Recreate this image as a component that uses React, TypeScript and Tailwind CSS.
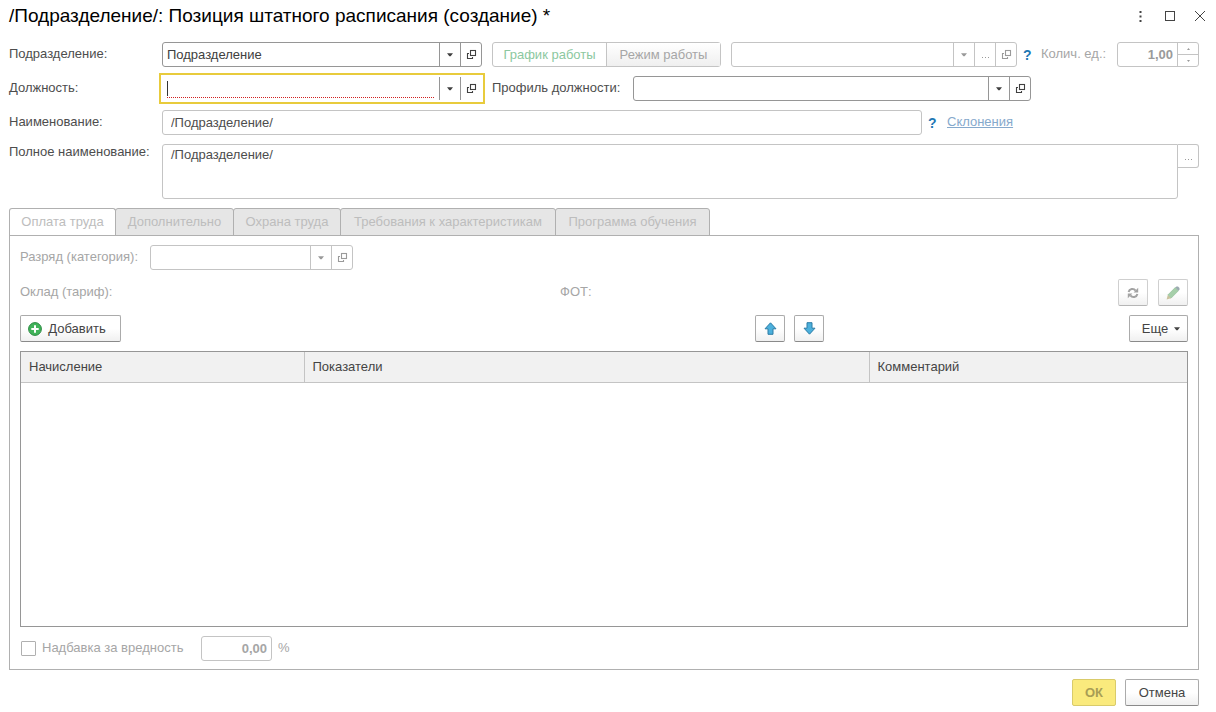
import type { ReactNode } from "react";

const tabs = [
  { title: "Оплата труда", width: "w-[107px]" },
  { title: "Дополнительно", width: "w-[119px]" },
  { title: "Охрана труда", width: "w-[108px]" },
  { title: "Требования к характеристикам", width: "w-[216px]" },
  { title: "Программа обучения", width: "w-[155px]" },
];

const columns = [
  { title: "Начисление", width: "w-[283px]" },
  { title: "Показатели", width: "w-[565px]" },
  { title: "Комментарий", width: "" },
];

function Caret() {
  return (
    <svg width="7" height="4" viewBox="0 0 7 4" fill="currentColor" aria-hidden>
      <path d="M0 0.300h6L3.600 3.300H2.400z" />
    </svg>
  );
}

function OpenIcon() {
  return (
    <svg width="11" height="11" viewBox="0 0 11 11" fill="none" stroke="currentColor" strokeWidth="1.1" aria-hidden>
      <rect x="4.5" y="1.5" width="5" height="5" />
      <path d="M3 4.500H1.500v5h5V8" />
    </svg>
  );
}

function Dots() {
  return (
    <svg width="9" height="9" viewBox="0 0 9 9" fill="currentColor" aria-hidden>
      <path d="M1 7h1v1H1zM4 7h1v1H4zM7 7h1v1H7z" />
    </svg>
  );
}

type FieldProps = {
  id: string;
  label?: string;
  value?: string;
  className: string;
  dots?: boolean;
  disabled?: boolean;
  focused?: boolean;
};

// Reference field: text box with list, optional "..." and open buttons
function RefField({ id, label, value = "", className, dots, disabled, focused }: FieldProps) {
  const line = disabled ? "border-[#c4c4c4] text-[#9a9a9a]" : "border-[#969696] text-[#404040]";
  const frame = focused ? "py-px pr-px outline-2 outline-offset-1 outline-[#e8cb3c]" : "rounded-[3px] border";
  const button = `flex w-[21px] shrink-0 items-center justify-center border-l ${line}`;

  return (
    <div className={`flex h-[25px] bg-white ${line} ${frame} ${className}`}>
      {focused ? (
        <div className="mx-[5px] mb-[2px] mt-1 flex min-w-0 flex-1 border-b border-dotted border-[#d02020]">
          <span className="mb-px w-px bg-[#333]" />
          <input id={id} aria-label={label} defaultValue={value} className="w-full min-w-0 outline-none" />
        </div>
      ) : (
        <input
          id={id}
          aria-label={label}
          defaultValue={value}
          disabled={disabled}
          className="min-w-0 flex-1 px-1 outline-none"
        />
      )}
      <button type="button" aria-label="Выбрать из списка" disabled={disabled} className={button}>
        <Caret />
      </button>
      {dots && (
        <button type="button" aria-label="Выбрать" disabled={disabled} className={button}>
          <Dots />
        </button>
      )}
      <button type="button" aria-label="Открыть" disabled={disabled} className={button}>
        <OpenIcon />
      </button>
    </div>
  );
}

type ButtonProps = {
  className: string;
  label?: string;
  disabled?: boolean;
  children: ReactNode;
};

function Button({ className, label, disabled, children }: ButtonProps) {
  const tone = disabled ? "border-[#cfcfcf] border-b-[#b5b5b5]" : "border-[#ababab] border-b-[#8a8a8a]";
  return (
    <button
      type="button"
      aria-label={label}
      disabled={disabled}
      className={`flex h-[27px] items-center justify-center rounded-[2px] border bg-linear-to-b from-white from-50% to-[#f0f0f0] text-[#444] ${tone} ${className}`}
    >
      {children}
    </button>
  );
}

function Arrow({ down }: { down?: boolean }) {
  return (
    <svg width="13" height="13" viewBox="0 0 13 13" className={down ? "rotate-180" : ""} aria-hidden>
      <path d="M6.500 0.800L12 6.800H9V12.300H4V6.800H1z" fill="#4cb0dc" stroke="#2c7ca6" />
    </svg>
  );
}

function Help() {
  return (
    <button type="button" aria-label="Справка" className="w-2 text-sm font-bold text-[#1f78b4]">
      ?
    </button>
  );
}

export default function App() {
  return (
    <main className="flex min-h-screen flex-col bg-white pb-[6px] pl-[9px] pr-[17px] font-['Liberation_Sans',Arial,sans-serif] text-[13px] text-[#4d4d4d]">
      <header className="-mr-[9px] flex h-8 items-center justify-between">
        <h1 className="text-[19px] text-black">/Подразделение/: Позиция штатного расписания (создание) *</h1>
        <div className="flex gap-[14px] text-[#444]">
          <button type="button" aria-label="Меню" className="flex size-4 items-center justify-center">
            <svg width="3" height="11" viewBox="0 0 3 11" fill="currentColor" aria-hidden>
              <path d="M0.500 0h2v2h-2zM0.500 4.500h2v2h-2zM0.500 9h2v2h-2z" />
            </svg>
          </button>
          <button type="button" aria-label="Развернуть" className="flex size-4 items-center justify-center">
            <svg width="10" height="10" viewBox="0 0 10 10" fill="none" stroke="currentColor" aria-hidden>
              <rect x="0.5" y="0.5" width="9" height="9" />
            </svg>
          </button>
          <button type="button" aria-label="Закрыть" className="flex size-4 items-center justify-center">
            <svg width="10" height="10" viewBox="0 0 10 10" stroke="currentColor" aria-hidden>
              <path d="M0 0l10 10M10 0L0 10" />
            </svg>
          </button>
        </div>
      </header>

      <form className="mt-[10px] flex flex-col gap-[9px]">
        <div className="flex items-center">
          <label htmlFor="department" className="w-[153px] shrink-0 pb-0.5">Подразделение:</label>
          <RefField id="department" value="Подразделение" className="w-80 shrink-0" />
          <div className="ml-[10px] flex h-[25px] w-[229px] shrink-0 rounded-[3px] border border-[#c4c4c4]">
            <button type="button" disabled className="flex-1 text-[#8cc8a0]">График работы</button>
            <button type="button" disabled className="flex-1 border-l border-[#c4c4c4] bg-linear-to-b from-white to-[#efefef] text-[#a6a6a6]">
              Режим работы
            </button>
          </div>
          <RefField id="schedule" label="График работы" className="ml-[10px] min-w-0 flex-1" dots disabled />
          <div className="ml-[6px] flex">
            <Help />
          </div>
          <label htmlFor="quantity" className="ml-[10px] w-[76px] pb-0.5 text-[#a6a6a6]">Колич. ед.:</label>
          <div className="flex h-[25px] w-[82px] shrink-0 rounded-[3px] border border-[#c4c4c4] text-[#9a9a9a]">
            <input id="quantity" defaultValue="1,00" disabled className="min-w-0 flex-1 px-1 text-right font-bold" />
            <div className="flex w-[21px] flex-col border-l border-[#c4c4c4]">
              <button type="button" aria-label="Увеличить" disabled className="flex flex-1 items-center justify-center border-b border-[#c4c4c4]">
                <svg width="3" height="2" viewBox="0 0 3 2" fill="currentColor" aria-hidden>
                  <path d="M0 2L1.500 0L3 2z" />
                </svg>
              </button>
              <button type="button" aria-label="Уменьшить" disabled className="flex flex-1 items-center justify-center">
                <svg width="3" height="2" viewBox="0 0 3 2" fill="currentColor" aria-hidden>
                  <path d="M0 0L1.500 2L3 0z" />
                </svg>
              </button>
            </div>
          </div>
        </div>

        <div className="flex items-center">
          <label htmlFor="position" className="w-[153px] shrink-0 pb-0.5">Должность:</label>
          <RefField id="position" className="w-80 shrink-0" focused />
          <label htmlFor="profile" className="ml-[10px] w-[141px] shrink-0 pb-0.5">Профиль должности:</label>
          <RefField id="profile" className="w-[398px]" />
        </div>

        <div className="flex items-center">
          <label htmlFor="name" className="w-[153px] shrink-0 pb-0.5">Наименование:</label>
          <input
            id="name"
            defaultValue="/Подразделение/"
            className="h-[25px] w-[760px] rounded-[3px] border border-[#c4c4c4] px-2"
          />
          <div className="ml-[6px] flex">
            <Help />
          </div>
          <a href="#declensions" className="ml-[11px] pb-0.5 text-[#86a9cc] underline">Склонения</a>
        </div>

        <div className="flex items-start">
          <label htmlFor="full-name" className="w-[153px] shrink-0 leading-4">Полное наименование:</label>
          <textarea
            id="full-name"
            defaultValue="/Подразделение/"
            className="h-[55px] flex-1 resize-none rounded-[3px] rounded-tr-none border border-[#c4c4c4] px-2"
          />
          <button
            type="button"
            aria-label="Открыть текст"
            className="flex h-6 w-[21px] items-center justify-center rounded-r-[3px] border border-l-0 border-[#c4c4c4] text-[#9a9a9a]"
          >
            <Dots />
          </button>
        </div>
      </form>

      <div role="tablist" className="mt-[9px] flex h-7">
        {tabs.map((tab, i) => (
          <button
            key={tab.title}
            type="button"
            role="tab"
            aria-selected={i === 0}
            disabled
            className={`-mr-px shrink-0 rounded-t-[3px] border border-[#b0b0b0] text-[#bdbdbd] ${tab.width} ${
              i === 0 ? "border-b-white bg-white" : "bg-[#e6e6e6]"
            }`}
          >
            {tab.title}
          </button>
        ))}
      </div>

      <section role="tabpanel" className="-mt-px flex flex-1 flex-col border border-[#b0b0b0] px-[10px] pb-2 pt-[9px] text-[#a6a6a6]">
        <div className="flex items-center">
          <label htmlFor="grade" className="w-[130px] pb-0.5">Разряд (категория):</label>
          <RefField id="grade" className="w-[203px]" disabled />
        </div>

        <div className="mt-[9px] flex items-center">
          <span className="w-[540px] pb-0.5">Оклад (тариф):</span>
          <span className="pb-0.5">ФОТ:</span>
          <div className="ml-auto flex gap-[10px]">
            <Button label="Обновить" className="w-[30px]" disabled>
              <svg width="12" height="12" viewBox="0 0 12 12" fill="none" stroke="#a3a3a3" strokeWidth="2" aria-hidden>
                <path d="M1.600 5A3.900 3.900 0 0 1 8.600 3.600M10.400 7A3.900 3.900 0 0 1 3.400 8.400" />
                <path d="M11.200 0.800V5.400H6.600zM0.800 11.200V6.600H5.400z" fill="#a3a3a3" stroke="none" />
              </svg>
            </Button>
            <Button label="Изменить" className="w-[30px]" disabled>
              <svg width="14" height="14" viewBox="0 0 14 14" aria-hidden>
                <path d="M1.800 9L9.200 1.600L12.400 4.800L5 12.200z" fill="#a5cfa9" stroke="#8db893" strokeWidth="0.6" />
                <path d="M9.200 1.600L10.500 0.400H12L13.500 2V3.500L12.400 4.800z" fill="#9aa9b0" />
                <path d="M1.800 9L5 12.200L0.600 13.400z" fill="#c9c29c" />
              </svg>
            </Button>
          </div>
        </div>

        <div className="mt-[9px] flex items-center">
          <Button className="w-[101px] gap-[6px] pr-[7px]">
            <svg width="14" height="14" viewBox="0 0 14 14" aria-hidden>
              <circle cx="7" cy="7" r="6.400" fill="#41b35a" stroke="#2c8a43" />
              <path d="M7 3.300v7.400M3.300 7h7.400" stroke="#fff" strokeWidth="2" />
            </svg>
            Добавить
          </Button>
          <div className="ml-auto mr-[305px] flex gap-[9px]">
            <Button label="Вверх" className="w-[30px]">
              <Arrow />
            </Button>
            <Button label="Вниз" className="w-[30px]">
              <Arrow down />
            </Button>
          </div>
          <Button className="w-[59px] gap-[6px] pl-[6px]">
            Еще
            <Caret />
          </Button>
        </div>

        <div className="mt-[9px] min-h-40 flex-1 border border-[#969696]">
          <table className="w-full table-fixed border-collapse text-[#444]">
            <thead>
              <tr className="h-[30px] border-b border-[#c4c4c4] bg-[#f1f1f1]">
                {columns.map((col) => (
                  <th
                    key={col.title}
                    scope="col"
                    className={`border-r border-[#c4c4c4] px-2 text-left font-normal last:border-r-0 ${col.width}`}
                  >
                    {col.title}
                  </th>
                ))}
              </tr>
            </thead>
            <tbody />
          </table>
        </div>

        <div className="mt-[9px] flex items-center">
          <input
            id="hazard"
            type="checkbox"
            disabled
            className="ml-px size-[15px] appearance-none rounded-[1px] border border-[#b0b0b0] bg-white"
          />
          <label htmlFor="hazard" className="ml-[6px] w-[159px] pb-0.5">Надбавка за вредность</label>
          <input
            id="hazard-rate"
            aria-label="Процент надбавки"
            defaultValue="0,00"
            disabled
            className="h-[25px] w-[71px] rounded-[3px] border border-[#c4c4c4] px-1 text-right font-bold"
          />
          <label htmlFor="hazard-rate" className="ml-[6px] pb-0.5">%</label>
        </div>
      </section>

      <footer className="mt-[9px] flex justify-end gap-[9px]">
        <button
          type="button"
          disabled
          className="h-[27px] w-11 rounded-[2px] border border-[#d9cb6a] bg-[#faea7d] font-bold text-[#a89d55]"
        >
          ОК
        </button>
        <Button className="w-[74px]">Отмена</Button>
      </footer>
    </main>
  );
}
